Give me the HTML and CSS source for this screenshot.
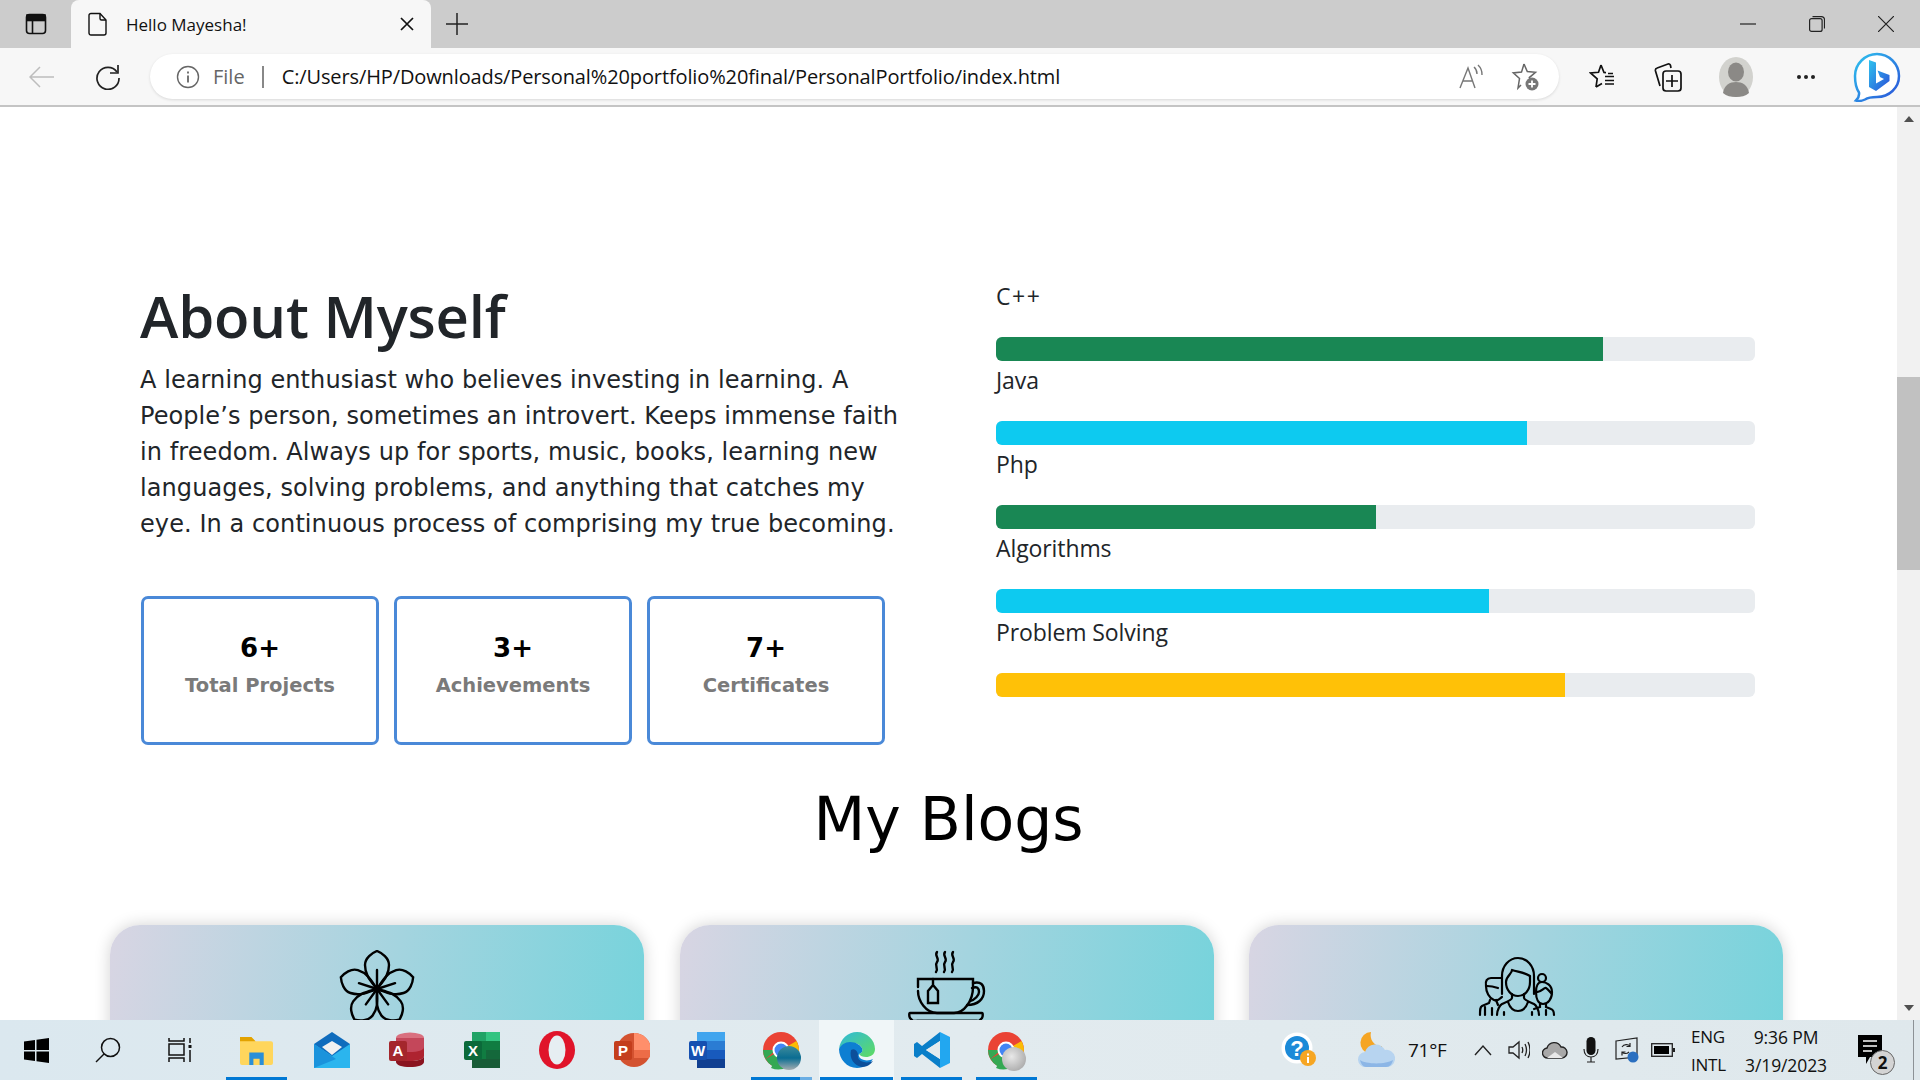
FILE: index.html
```html
<!DOCTYPE html>
<html lang="en">
<head>
<meta charset="utf-8">
<title>Hello Mayesha!</title>
<link rel="stylesheet" href="styles.css">
</head>
<body>
<div class="window">
  <header class="tabstrip">
    <div class="strip-btn"><svg width="24" height="24" viewBox="0 0 24 24" fill="none" stroke="#111" stroke-width="1.6"><rect x="2.5" y="2.5" width="19" height="19" rx="3"/><path d="M2.5 8.5h19" /><path d="M3 3h18v5H3z" fill="#111"/><path d="M8.5 8.5v13"/></svg></div>
    <div class="tab">
      <svg width="20" height="24" viewBox="0 0 20 24" fill="none" stroke="#111" stroke-width="1.4"><path d="M3 1.5h9l6 6.5v13a2 2 0 0 1-2 2H3a2 2 0 0 1-2-2V3.500a2 2 0 0 1 2-2z"/><path d="M12 1.500v5a1.500 1.500 0 0 0 1.500 1.500H18"/></svg>
      <span class="tab-title">Hello Mayesha!</span>
      <svg class="tab-close" width="14" height="14" viewBox="0 0 14 14" stroke="#111" stroke-width="1.700"><path d="M1 1l12 12M13 1L1 13"/></svg>
    </div>
    <div class="strip-plus"><svg width="22" height="22" viewBox="0 0 22 22" stroke="#222" stroke-width="1.500"><path d="M11 0v22M0 11h22"/></svg></div>
    <div class="win-ctrls">
      <div class="win-btn"><svg width="16" height="16" viewBox="0 0 16 16" stroke="#222" stroke-width="1.200"><path d="M0 8h16"/></svg></div>
      <div class="win-btn"><svg width="16" height="16" viewBox="0 0 16 16" fill="none" stroke="#222" stroke-width="1.200"><rect x=".6" y="2.600" width="12.500" height="12.800" rx="2"/><path d="M3.500 .6h9a3 3 0 0 1 3 3v9"/></svg></div>
      <div class="win-btn"><svg width="16" height="16" viewBox="0 0 16 16" stroke="#222" stroke-width="1.200"><path d="M0 0l16 16M16 0L0 16"/></svg></div>
    </div>
  </header>

  <nav class="toolbar">
    <div class="tool"><svg width="26" height="22" viewBox="0 0 26 22" fill="none" stroke="#bdbdbd" stroke-width="1.500"><path d="M25 11H1M11 1L1 11l10 10"/></svg></div>
    <div class="tool"><svg width="26" height="26" viewBox="0 0 26 26" fill="none" stroke="#222" stroke-width="1.700"><path d="M22 8a11 11 0 1 0 2 6"/><path d="M23 1v8h-8"/></svg></div>
    <div class="address">
      <svg class="addr-info" width="24" height="24" viewBox="0 0 24 24" fill="none" stroke="#666" stroke-width="1.400"><circle cx="12" cy="12" r="10.500"/><path d="M12 10.500v7M12 6.500v2" stroke-width="1.800"/></svg>
      <span class="addr-file">File</span>
      <span class="addr-sep"></span>
      <span class="addr-url">C:/Users/HP/Downloads/Personal%20portfolio%20final/PersonalPortfolio/index.html</span>
      <svg class="addr-read" width="26" height="26" viewBox="0 0 26 26" fill="none" stroke="#777" stroke-width="1.400"><path d="M1 24L9 4l7 20M4 17h10"/><path d="M15 3a9 9 0 0 1 3 7M19 1a13 13 0 0 1 4 10"/></svg>
      <svg class="addr-fav" width="30" height="30" viewBox="0 0 30 30" fill="none" stroke="#666" stroke-width="1.500"><path d="M13 2l3.300 7.600 8.200.7-6.200 5.300 1.500 4M10 23l-3 3 1.500-9.500-6.200-5.600 8.200-.8L13 2"/><circle cx="21" cy="22" r="6.500" fill="#777" stroke="none"/><path d="M21 18.500v7M17.500 22h7" stroke="#fff" stroke-width="1.800"/></svg>
    </div>
    <div class="tools-right">
      <div class="tool"><svg width="26" height="28" viewBox="0 0 26 28" fill="none" stroke="#111" stroke-width="1.700"><path d="M12 2l3 7.500 2 .2M24 10.500h-5M7 24l1.200-8.200L1.500 10l8-.7L12 2M7 24l6-3.500"/><path d="M16 13.500h9M16 17.500h9M16 21h9"/></svg></div>
      <div class="tool"><svg width="28" height="30" viewBox="0 0 28 30" fill="none" stroke="#111" stroke-width="1.700"><rect x="9" y="9" width="18" height="20" rx="3"/><path d="M18 13v12M12 19h12"/><path d="M6 24L1.500 9a2.500 2.500 0 0 1 1.700-3L14 2a2 2 0 0 1 2.500 1.500L17 6"/></svg></div>
      <div class="tool tool-avatar"><svg width="34" height="40" viewBox="0 0 34 40"><ellipse cx="17" cy="20" rx="17" ry="20" fill="#d2d2ce"/><ellipse cx="17" cy="15" rx="8" ry="9.500" fill="#8b8986"/><path d="M4 36c1-8 7-11 13-11s12 3 13 11c-3.500 3-8 4-13 4s-9.500-1-13-4z" fill="#8b8986"/></svg></div>
      <div class="tool tool-dots"><svg width="20" height="6" viewBox="0 0 20 6" fill="#222"><circle cx="3" cy="3" r="2"/><circle cx="10" cy="3" r="2"/><circle cx="17" cy="3" r="2"/></svg></div>
      <div class="tool tool-bing"><svg width="48" height="50" viewBox="0 0 48 50"><defs><linearGradient id="bingg" x1="0" y1="0" x2="1" y2="1"><stop offset="0" stop-color="#2fc3ee"/><stop offset="1" stop-color="#2a50d8"/></linearGradient></defs><path d="M24 2c12 0 22 10 22 22s-10 21-22 21c-4 0-9 .5-12 2.500-3 1.500-7 1.500-9 1 2-2 3.500-5 3-8C3 36 2 30 2 24 2 12 12 2 24 2z" fill="#fff" stroke="url(#bingg)" stroke-width="2.500"/><path d="M16 8l7 2.500v21l8-4.500-4-2-2.500-6.500 12 4.500v6L23 39l-7-4z" fill="url(#bingg)"/></svg></div>
    </div>
  </nav>

  <div class="viewport">
    <main class="page">
      <section class="about">
        <div class="about-left">
          <h1 class="about-title">About Myself</h1>
          <p class="about-text">A learning enthusiast who believes investing in learning. A<br>People’s person, sometimes an introvert. Keeps immense faith<br>in freedom. Always up for sports, music, books, learning new<br>languages, solving problems, and anything that catches my<br>eye. In a continuous process of comprising my true becoming.</p>
          <div class="stats">
            <div class="stat"><div class="stat-num">6+</div><div class="stat-label">Total Projects</div></div>
            <div class="stat"><div class="stat-num">3+</div><div class="stat-label">Achievements</div></div>
            <div class="stat"><div class="stat-num">7+</div><div class="stat-label">Certificates</div></div>
          </div>
        </div>
        <div class="skills">
          <div class="skill-label skill-label-wide">C++</div>
          <div class="bar"><div class="fill green" style="width:80%"></div></div>
          <div class="skill-label">Java</div>
          <div class="bar"><div class="fill cyan" style="width:70%"></div></div>
          <div class="skill-label">Php</div>
          <div class="bar"><div class="fill green" style="width:50%"></div></div>
          <div class="skill-label">Algorithms</div>
          <div class="bar"><div class="fill cyan" style="width:65%"></div></div>
          <div class="skill-label">Problem Solving</div>
          <div class="bar"><div class="fill yellow" style="width:75%"></div></div>
        </div>
      </section>
      <h2 class="blogs-title">My Blogs</h2>
      <section class="blogs">
        <article class="blog">
          <svg class="blog-icon" width="80" height="80" viewBox="0 0 80 80" fill="none" stroke="#000" stroke-width="2.400" stroke-linecap="round">
            <g transform="translate(40 39)">
              <g id="petal"><path d="M0 0C-7-9-12-14-12-24-12-31-5-36 0-38 5-36 12-31 12-24 12-14 7-9 0 0z"/><path d="M0 0V-19"/></g>
              <use href="#petal" transform="rotate(72)"/>
              <use href="#petal" transform="rotate(144)"/>
              <use href="#petal" transform="rotate(216)"/>
              <use href="#petal" transform="rotate(288)"/>
            </g>
          </svg>
        </article>
        <article class="blog">
          <svg class="blog-icon" width="80" height="80" viewBox="0 0 80 80" fill="none" stroke="#000" stroke-width="2.400" stroke-linecap="round">
            <path d="M30 2c-3 4 3 6 0 10s2 6-1 10M38 2c-3 4 3 6 0 10s2 6-1 10M46 2c-3 4 3 6 0 10s2 6-1 10"/>
            <path d="M11 37v-8h55v8c0 14-9 26-19 26H30C19 63 11 51 11 41" />
            <path d="M66 33c8-2 11 2 11 8 0 8-6 14-17 14M65 38c5-2 7 0 7 4 0 3-4 8-9 9"/>
            <path d="M26 29v6M26 35l5 6v12h-10v-12z"/>
            <path d="M3 63h72c1 0 1 3 0 5l-3 3H6l-3-3c-1-2-1-5 0-5z"/>
            <path d="M10 71h60"/>
          </svg>
        </article>
        <article class="blog">
          <svg class="blog-icon" width="80" height="80" viewBox="0 0 80 80" fill="none" stroke="#000" stroke-width="2.200" stroke-linecap="round">
            <path d="M26 44V26c0-10 7-18 16-18s16 8 16 18v18"/>
            <path d="M36 20c5 2 12 2 18 6M36 20c0 4-6 6-6 12 0 8 5 14 12 14s12-6 12-14v-6"/>
            <path d="M36 44v4c0 2-8 5-10 6s-5 6-5 11M48 44v4c0 2 8 5 10 6s5 6 5 11M32 52c2 6 6 9 10 9s8-3 10-9"/>
            <path d="M28 65v-3M56 65v-3"/>
            <path d="M25 28h-10c-4 0-6 3-5 8 0 6 3 12 8 14s6-2 8-3"/>
            <path d="M11 36c4 0 8 1 11 2"/>
            <path d="M14 50l-1 3-7 3c-2 1-2 4-2 9M20 50l2 5M9 57v8M16 58v7"/>
            <circle cx="66" cy="28" r="4"/>
            <path d="M60 42c0-6 2-10 6-10s10 3 10 10-4 12-9 12-7-6-7-12zM60 42c5 1 8-5 10-4s3 3 6 6"/>
            <path d="M64 54v3l-6 2M70 54v3l5 2c3 1 3 4 3 6M70 60v5"/>
          </svg>
        </article>
      </section>
    </main>
    <div class="scrollbar">
      <span class="arrow-up"></span>
      <div class="thumb"></div>
      <span class="arrow-down"></span>
    </div>
  </div>

  <footer class="taskbar">
    <div class="sys"><svg width="25" height="25" viewBox="0 0 25 25" fill="#000"><path d="M0 3.500l11-1.500v10H0zM12.500 1.800L25 0v12H12.500zM0 13.500h11v9.500L0 21.500zM12.500 13.500H25V25l-12.500-1.800z"/></svg></div>
    <div class="sys"><svg width="26" height="26" viewBox="0 0 26 26" fill="none" stroke="#111" stroke-width="1.500"><circle cx="15.500" cy="10.500" r="9"/><path d="M9 17L1 25"/></svg></div>
    <div class="sys"><svg width="24" height="24" viewBox="0 0 24 24" fill="none" stroke="#111" stroke-width="1.500"><path d="M1 0v3h15V0M1 24v-4h15v4"/><rect x="1" y="6" width="15" height="11"/><path d="M22 0v5M22 12v12"/><rect x="20.500" y="7" width="3" height="3" fill="#111" stroke="none"/></svg></div>

    <div class="app is-open"><svg width="33" height="33" viewBox="0 0 32 32"><path d="M0 5a2 2 0 0 1 2-2h9l4 4h15a2 2 0 0 1 2 2v19a2 2 0 0 1-2 2H2a2 2 0 0 1-2-2z" fill="#ffd65c"/><path d="M0 3h11l4 4H0z" fill="#e2a200"/><path d="M9 30V18h14v12h-4v-6h-6v6z" fill="#2a8fd8"/></svg></div>
    <div class="app"><svg width="36" height="36" viewBox="0 0 36 36"><path d="M0 12L18 0l18 12v24H0z" fill="#0f6cbd"/><path d="M8 15l10-6 10 6-10 8z" fill="#f1f1f1"/><path d="M0 12l18 12 18-12v24H0z" fill="#2bb5ee"/><path d="M0 36V12l22 15z" fill="#1a93dc"/></svg></div>
    <div class="app"><svg width="36" height="36" viewBox="0 0 36 36"><ellipse cx="21" cy="6" rx="14" ry="5.500" fill="#d9707f"/><path d="M7 6h28v10c0 3-6 5-14 5S7 19 7 16z" fill="#c4475a"/><path d="M7 15c0 3 6 5 14 5s14-2 14-5v9c0 3-6 5-14 5S7 27 7 24z" fill="#ae2330"/><path d="M7 24c0 3 6 5 14 5s14-2 14-5v6c0 3-6 5-14 5S7 33 7 30z" fill="#8a1420"/><rect x="0" y="9" width="18" height="20" rx="2" fill="#a4262c"/><text x="9" y="24" class="office-letter">A</text></svg></div>
    <div class="app"><svg width="36" height="36" viewBox="0 0 36 36"><rect x="8" y="0" width="28" height="36" rx="2" fill="#107c41"/><rect x="22" y="0" width="14" height="9" fill="#33c481"/><rect x="8" y="0" width="14" height="9" fill="#21a366"/><rect x="22" y="18" width="14" height="9" fill="#185c37" opacity=".6"/><rect x="8" y="27" width="28" height="9" fill="#185c37"/><rect x="0" y="9" width="18" height="19" rx="2" fill="#0b6a3a"/><text x="9" y="24" class="office-letter">X</text></svg></div>
    <div class="app"><svg width="36" height="38" viewBox="0 0 36 38"><ellipse cx="18" cy="19" rx="18" ry="19" fill="#e0142a"/><ellipse cx="18" cy="19" rx="8.500" ry="14.500" fill="#e6eef2"/></svg></div>
    <div class="app"><svg width="36" height="36" viewBox="0 0 36 36"><circle cx="20" cy="18" r="17" fill="#d35230"/><path d="M20 1a17 17 0 0 1 17 17H20z" fill="#ff8f6b"/><path d="M20 18h17a17 17 0 0 1-2 8H20z" fill="#ed6c47"/><rect x="0" y="9" width="18" height="19" rx="2" fill="#c43e1c"/><text x="9" y="24" class="office-letter">P</text></svg></div>
    <div class="app"><svg width="36" height="36" viewBox="0 0 36 36"><rect x="8" y="0" width="28" height="36" rx="2" fill="#2b7cd3"/><rect x="8" y="0" width="28" height="9" fill="#41a5ee"/><rect x="8" y="18" width="28" height="9" fill="#185abd"/><rect x="8" y="27" width="28" height="9" fill="#103f91"/><rect x="0" y="9" width="18" height="19" rx="2" fill="#1550b0"/><text x="9" y="24" class="office-letter">W</text></svg></div>
    <div class="app is-open is-split"><svg width="40" height="44" viewBox="0 0 40 44"><use href="#chromeIcon"/><defs><linearGradient id="blueBadge" x1="0" y1="0" x2="0" y2="1"><stop offset="0" stop-color="#3e8b9b"/><stop offset=".5" stop-color="#0a6d92"/><stop offset="1" stop-color="#a5adb0"/></linearGradient></defs><circle cx="27" cy="30" r="12" fill="url(#blueBadge)"/></svg></div>
    <div class="app is-open is-active"><svg width="36" height="36" viewBox="0 0 36 36"><defs><linearGradient id="edgeA" x1="0" y1="0" x2="1" y2="1"><stop offset="0" stop-color="#2fb9dc"/><stop offset="1" stop-color="#5fdc60"/></linearGradient></defs><path d="M0 17C1 7 9 0 18 0c10 0 18 8 18 17 0 6-5 8-9 8-3 0-6-1-7-3 3-1 4-3 3-6-2-4-7-6-12-4C5 14 1 14 0 17z" fill="url(#edgeA)"/><path d="M0 17c2-4 6-7 11-7 6 0 10 3 12 6 1 3 0 5-3 6-1 2 1 5 5 6 3 1 7 0 9-1-3 5-9 9-16 9C8 36 0 27 0 17z" fill="#0d7fd2"/><path d="M12 18c-2 8 3 16 11 17 5 0 9-3 11-6-2 1-6 2-9 1-5-1-7-4-6-8-1-3-3-6-7-4z" fill="#0c4f9a"/></svg></div>
    <div class="app is-open"><svg width="36" height="36" viewBox="0 0 36 36"><path d="M26 0l10 5v26l-10 5z" fill="#22a7f0"/><path d="M26 0v9L12 18l14 9v9L8 22l-5 4-3-2V12l3-2 5 4z" fill="#0a7fc9"/><path d="M26 9v18l-14-9z" fill="#e4ebee"/></svg></div>
    <div class="app is-open"><svg width="40" height="44" viewBox="0 0 40 44"><defs><g id="chromeIcon"><circle cx="19" cy="22" r="18" fill="#ea4335"/><path d="M19 22L3.500 31A18 18 0 0 0 19 40z" fill="#34a853"/><path d="M1 22a18 18 0 0 0 2.500 9L14 22z" fill="#34a853"/><path d="M19 22l15.500-9A18 18 0 0 1 26 38.500z" fill="#fbbc05"/><path d="M19 22L9 40a18 18 0 0 0 17-1.500z" fill="#34a853"/><circle cx="19" cy="22" r="8.500" fill="#fff"/><circle cx="19" cy="22" r="6.500" fill="#4285f4"/></g><radialGradient id="grayBadge" cx=".4" cy=".4" r=".7"><stop offset="0" stop-color="#e8e8e8"/><stop offset="1" stop-color="#a8a8a8"/></radialGradient></defs><use href="#chromeIcon"/><circle cx="27" cy="31" r="12" fill="url(#grayBadge)"/></svg></div>

    <div class="tray">
      <div class="tray-help"><svg width="36" height="36" viewBox="0 0 36 36"><circle cx="16" cy="16" r="15.500" fill="#fff"/><circle cx="16" cy="16" r="12" fill="#1b8ad8"/><text x="16" y="24" class="help-q">?</text><circle cx="27" cy="26" r="8" fill="#f6a623"/><rect x="26" y="25" width="2" height="6" fill="#fff"/><rect x="26" y="21.500" width="2" height="2" fill="#fff"/></svg></div>
      <div class="tray-weather"><svg width="40" height="40" viewBox="0 0 40 40"><path d="M14 2a11 11 0 1 0 11 14C18 17 12 10 14 2z" fill="#f5a524"/><path d="M9 37a7.500 7.500 0 0 1-1-15 11 11 0 0 1 20-2 8.500 8.500 0 0 1 3 17z" fill="#b7d4f0"/><path d="M3 30c5 4 25 5 33 0-1 4-3 7-7 7H9c-3 0-5-3-6-7z" fill="#8cb6e6"/></svg></div>
      <div class="tray-temp">71°F</div>
      <div class="tray-icon"><svg width="18" height="12" viewBox="0 0 18 12" fill="none" stroke="#222" stroke-width="1.400"><path d="M1 11l8-9 8 9"/></svg></div>
      <div class="tray-icon"><svg width="22" height="20" viewBox="0 0 22 20" fill="none" stroke="#222" stroke-width="1.300"><path d="M1 7h4l6-5v16l-6-5H1z"/><path d="M14 7c1 2 1 4 0 6M17 4c2 4 2 8 0 12M20 2c2.500 5 2.500 11 0 16"/></svg></div>
      <div class="tray-icon"><svg width="26" height="18" viewBox="0 0 26 18"><path d="M6 17a5 5 0 0 1-1-10 7.500 7.500 0 0 1 14-1 5.500 5.500 0 0 1 1 11z" fill="#a8a8a8" stroke="#222" stroke-width="1.400"/><path d="M5 17l8-6 8 6z" fill="#e8e8e8"/></svg></div>
      <div class="tray-icon"><svg width="16" height="26" viewBox="0 0 16 26"><rect x="3.500" y="0" width="9" height="18" rx="4.500" fill="#111"/><path d="M1 12c0 5 3 8 7 8s7-3 7-8M8 20v5M4 25h8" fill="none" stroke="#222" stroke-width="1.200"/></svg></div>
      <div class="tray-icon"><svg width="24" height="26" viewBox="0 0 24 26"><path d="M1 4l21-3v19L1 22z" fill="none" stroke="#222" stroke-width="1.200"/><path d="M7 10c2-3 6-3 8-1M15 6v3.500h-3.500M14 15c-2 2-5 2-7 0M7 18.500V15h3.500" fill="none" stroke="#222" stroke-width="1.200"/><circle cx="18" cy="20" r="5.500" fill="#2a6fc0"/></svg></div>
      <div class="tray-icon"><svg width="24" height="16" viewBox="0 0 24 16"><rect x=".7" y="1.700" width="20.600" height="12.600" fill="none" stroke="#222" stroke-width="1.300"/><rect x="3" y="4" width="15" height="8" fill="#000"/><rect x="22" y="6" width="2" height="4" fill="#222"/></svg></div>
      <div class="tray-lang"><span>ENG</span><span>INTL</span></div>
      <div class="tray-clock"><span>9:36 PM</span><span>3/19/2023</span></div>
      <div class="tray-notif"><svg width="24" height="30" viewBox="0 0 24 30"><path d="M0 0h24v22H12l-4 7v-7H0z" fill="#000"/><path d="M5 6h14M5 11h14M5 16h9" stroke="#fff" stroke-width="1.500"/></svg><span class="notif-badge">2</span></div>
      <div class="tray-peek"></div>
    </div>
  </footer>
</div>
</body>
</html>
```

FILE: styles.css
```css
* { box-sizing: border-box; }
html, body { margin: 0; padding: 0; height: 100%; overflow: hidden; }
body { font-family: "Open Sans", "Noto Sans", sans-serif; color: #212529; background: #fff; }
.window { width: 1920px; height: 1080px; display: flex; flex-direction: column; overflow: hidden; }

/* tab strip */
.tabstrip { height: 48px; flex: none; background: #cccccc; display: flex; align-items: stretch; }
.strip-btn { width: 71px; display: flex; align-items: center; justify-content: center; }
.tab { width: 360px; background: #f7f7f7; border-radius: 8px 8px 0 0; display: flex; align-items: center; padding: 0 17px; }
.tab-title { margin-left: 18px; flex: 1; font-size: 17px; color: #111; letter-spacing: 0; }
.strip-plus { width: 52px; display: flex; align-items: center; justify-content: center; }
.win-ctrls { margin-left: auto; display: flex; padding-right: 0; }
.win-btn { width: 69px; display: flex; align-items: center; justify-content: center; }

/* toolbar */
.toolbar { height: 59px; flex: none; background: #f7f7f7; border-bottom: 2px solid #c4c4c4; display: flex; align-items: center; padding-left: 9px; }
.tool { width: 66px; height: 57px; display: flex; align-items: center; justify-content: center; }
.address { margin-left: 9px; width: 1409px; height: 45px; background: #fff; border-radius: 23px; box-shadow: 0 1px 3px rgba(0,0,0,.12); display: flex; align-items: center; padding-left: 26px; }
.addr-file { margin-left: 13px; font-size: 20px; color: #666; }
.addr-sep { margin-left: 17px; width: 2px; height: 22px; background: #888; }
.addr-url { margin-left: 18px; font-size: 20px; color: #111; letter-spacing: -.12px; white-space: nowrap; }
.addr-read { margin-left: auto; }
.addr-fav { margin-left: 26px; margin-right: 18px; }
.tools-right { margin-left: 10px; display: flex; }
.tool-avatar, .tool-dots { width: 70px; }
.tool-bing { width: 72px; }

/* page */
.viewport { flex: 1; min-height: 0; display: flex; }
.page { flex: 1; min-width: 0; overflow: hidden; background: #fff; }
.about { display: flex; padding: 170px 142px 0 140px; }
.about-left { width: 856px; flex: none; padding-top: 5px; }
.about-title { margin: 0 0 13px; font-size: 58px; line-height: 67px; font-weight: 600; color: #212529; letter-spacing: -.2px; }
.about-text { margin: 0; font-family: "DejaVu Sans", sans-serif; font-size: 24px; line-height: 36px; color: #212529; white-space: nowrap; letter-spacing: .08px; }
.stats { margin-top: 54px; display: flex; gap: 15px; padding-left: 1px; }
.stat { width: 238px; height: 149px; border: 3px solid #4a89d8; border-radius: 7px; text-align: center; padding-top: 32px; font-family: "DejaVu Sans", sans-serif; font-weight: 700; }
.stat-num { font-size: 26px; line-height: 34px; color: #000; }
.stat-label { margin-top: 7px; font-size: 19.500px; line-height: 28px; color: #7a7a7a; }
.skills { flex: 1; }
.skill-label { height: 60px; font-size: 23px; line-height: 38px; color: #212529; letter-spacing: -.1px; }
.skill-label-wide { letter-spacing: 1.500px; }
.bar { height: 24px; background: #e9ecef; border-radius: 6px; overflow: hidden; margin-bottom: 0; }
.fill { height: 100%; }
.green { background: #198754; }
.cyan { background: #0dcaf0; }
.yellow { background: #ffc107; }
.blogs-title { margin: 38px 0 0; font-family: "DejaVu Sans", sans-serif; font-weight: 400; font-size: 60px; line-height: 72px; text-align: center; color: #000; }
.blogs { margin-top: 70px; padding-left: 110px; display: grid; grid-template-columns: repeat(3, 534px); column-gap: 35.500px; }
.blog { height: 300px; border-radius: 30px; background: linear-gradient(100deg, #d8d5e3, #70d3db); box-shadow: 0 0 16px rgba(0,0,0,.18); padding-top: 25px; text-align: center; }
.blog-icon { display: inline-block; }

/* scrollbar */
.scrollbar { width: 23px; flex: none; background: #f1f1f1; display: flex; flex-direction: column; align-items: center; padding: 9px 0; }
.thumb { width: 23px; height: 193px; background: #c1c1c1; margin-top: 255px; }
.arrow-up, .arrow-down { width: 0; height: 0; border-left: 5px solid transparent; border-right: 5px solid transparent; }
.arrow-up { border-bottom: 6px solid #505050; }
.arrow-down { border-top: 6px solid #505050; margin-top: auto; }

/* taskbar */
.taskbar { height: 60px; flex: none; background: linear-gradient(90deg, #dbe8ef, #e2ebef 50%, #dfe8ec); display: flex; align-items: stretch; }
.sys { width: 72px; display: flex; align-items: center; justify-content: center; }
.sys:nth-child(3) { margin-right: 3px; }
.app { width: 75px; position: relative; display: flex; align-items: center; justify-content: center; }
.app.is-open::after { content: ""; position: absolute; left: 7px; right: 7px; bottom: 0; height: 3px; background: #0078d4; }
.app.is-active { background: #f0f6f8; }
.app.is-active::after { left: 1px; right: 1px; }
.app.is-split::after { background: linear-gradient(90deg, #0078d4 80%, #6aaee4 80%); }
.office-letter { font-family: "Liberation Sans", sans-serif; font-weight: 700; font-size: 15px; fill: #fff; text-anchor: middle; }
.help-q { font-family: "Liberation Sans", sans-serif; font-weight: 700; font-size: 22px; fill: #fff; text-anchor: middle; }
.tray { margin-left: auto; width: 640px; flex: none; display: flex; align-items: center; font-size: 17.500px; color: #111; }
.tray-help { width: 38px; display: flex; justify-content: center; }
.tray-weather { margin-left: 39px; width: 40px; display: flex; }
.tray-temp { margin-left: 11px; width: 41px; white-space: nowrap; font-size: 19px; letter-spacing: -.3px; }
.tray-icon { width: 36px; display: flex; justify-content: center; }
.tray-temp + .tray-icon { margin-left: 16px; }
.tray-lang { margin-left: 10px; padding-top: 2px; width: 36px; display: flex; flex-direction: column; gap: 6px; line-height: 22px; font-size: 17px; letter-spacing: -.25px; }
.tray-clock { margin-left: 9px; padding-top: 2px; width: 100px; display: flex; flex-direction: column; align-items: center; gap: 6px; line-height: 22px; font-size: 17.500px; letter-spacing: -.1px; }
.tray-notif { margin-left: 9px; width: 50px; position: relative; display: flex; justify-content: center; }
.notif-badge { position: absolute; left: 25px; top: 15px; width: 25px; height: 25px; border-radius: 50%; background: #d4d4d4; border: 1px solid #666; display: flex; align-items: center; justify-content: center; font-size: 17px; font-weight: 700; color: #111; }
.tray-peek { margin-left: 18px; width: 1px; height: 60px; background: #8c9296; }
```
